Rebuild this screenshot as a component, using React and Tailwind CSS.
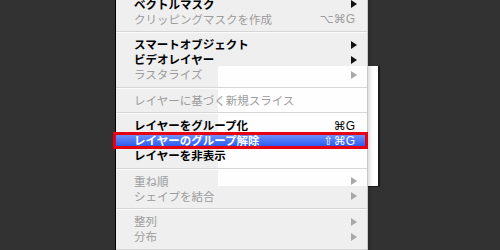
import React from 'react';

const Arrow = ({ disabled }) => (
  <svg width="6" height="8" viewBox="0 0 6 8" className="shrink-0">
    <polygon points="0,0 6,4 0,8" fill={disabled ? '#a8a8a8' : '#111'} />
  </svg>
);

const sections = [
  [
    { label: 'ベクトルマスク', arrow: true },
    { label: 'クリッピングマスクを作成', shortcut: '⌥⌘G', disabled: true },
  ],
  [
    { label: 'スマートオブジェクト', arrow: true },
    { label: 'ビデオレイヤー', arrow: true },
    { label: 'ラスタライズ', arrow: true, disabled: true },
  ],
  [{ label: 'レイヤーに基づく新規スライス', disabled: true }],
  [
    { label: 'レイヤーをグループ化', shortcut: '⌘G' },
    { label: 'レイヤーのグループ解除', shortcut: '⇧⌘G', active: true },
    { label: 'レイヤーを非表示' },
  ],
  [
    { label: '重ね順', arrow: true, disabled: true },
    { label: 'シェイプを結合', arrow: true, disabled: true },
  ],
  [
    { label: '整列', arrow: true, disabled: true },
    { label: '分布', arrow: true, disabled: true },
  ],
];

const MenuItem = ({ item }) => {
  const color = item.active ? 'text-white' : item.disabled ? 'text-[#9c9c9c]' : 'text-black';
  return (
    <div
      className={`flex h-[15px] items-center justify-between pl-[18px] pr-[10px] ${color} ${
        item.active ? 'bg-gradient-to-b from-[#7a98fb] to-[#1f4ff0]' : ''
      }`}
    >
      <span className={`text-[11.5px] leading-none ${item.disabled ? 'font-normal' : 'font-bold'}`}>
        {item.label}
      </span>
      {item.arrow && <Arrow disabled={item.disabled} />}
      {item.shortcut && (
        <span className="pr-[2px] font-['Liberation_Sans','DejaVu_Sans',sans-serif] text-[12px] leading-none">
          {item.shortcut}
        </span>
      )}
    </div>
  );
};

const Separator = () => (
  <div className="flex h-[10.5px] flex-col justify-center">
    <div className="h-px bg-[#d6d6d6]" />
    <div className="h-px bg-white/80" />
  </div>
);

export default function App() {
  return (
    <div className="relative h-[250px] w-[500px] overflow-hidden bg-[#323232] font-['Noto_Sans_CJK_JP',sans-serif]">
      {/* window behind the menu */}
      <div className="absolute left-[218px] top-[66px] h-[121px] w-[162px] border-r-2 border-b border-[#1a1a1a] bg-white" />

      <div className="relative ml-[115px] w-[253px] border-l border-black border-r border-r-[#c8c8c8] bg-[rgba(254,254,254,0.93)] shadow-[2px_0_4px_rgba(0,0,0,0.15)]">
        <div className="-mt-[3.25px]">
          {sections.map((sec, i) => (
            <div key={i}>
              {i > 0 && <Separator />}
              {sec.map((item) => (
                <MenuItem key={item.label} item={item} />
              ))}
            </div>
          ))}
          <Separator />
        </div>
      </div>

      {/* red annotation box */}
      <div className="absolute left-[113px] top-[132px] h-[17px] w-[255px] border-[3px] border-[#e60012]" />
    </div>
  );
}
